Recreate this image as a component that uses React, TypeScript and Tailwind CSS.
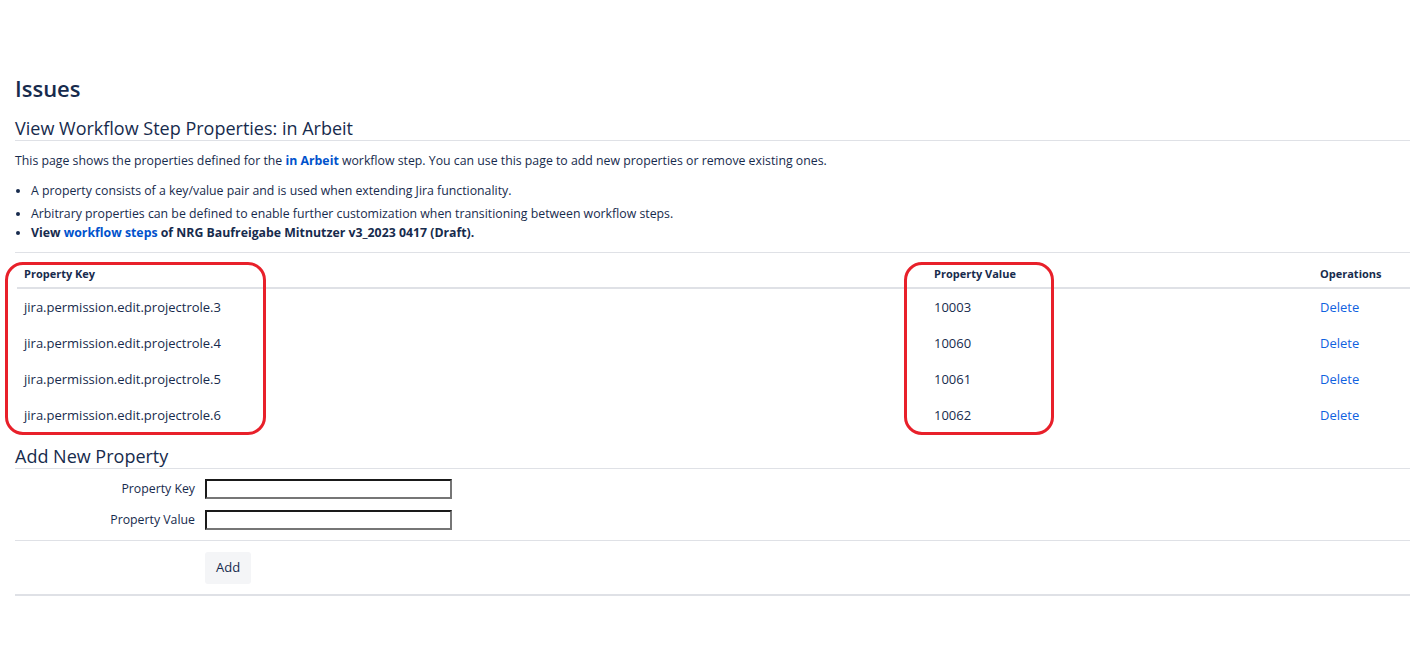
import React from "react";

const rows = [
  ["jira.permission.edit.projectrole.3", "10003"],
  ["jira.permission.edit.projectrole.4", "10060"],
  ["jira.permission.edit.projectrole.5", "10061"],
  ["jira.permission.edit.projectrole.6", "10062"],
];

export default function App() {
  return (
    <div className="relative w-[1414px] h-[667px] bg-white text-[#172b4d] font-['Open_Sans','Noto_Sans',sans-serif] text-[12.3px]">
      <div className="pl-[15px] pr-[4px] pt-[74px]">
        <h1 className="text-[22px] leading-[28px] font-semibold">Issues</h1>
        <h2 className="mt-[14px] text-[18px] leading-[24px] font-medium border-b border-[#dfe1e6] pb-[0px]">
          View Workflow Step Properties: in Arbeit
        </h2>
        <p className="mt-[12px] leading-[16px]">
          This page shows the properties defined for the{" "}
          <a className="text-[#0052cc] font-bold">in Arbeit</a> workflow step. You can use this page to add new properties or remove existing ones.
        </p>
        <ul className="mt-[14px] list-disc pl-[16px] leading-[16px]">
          <li className="mb-[7px]">A property consists of a key/value pair and is used when extending Jira functionality.</li>
          <li className="mb-[3px]">Arbitrary properties can be defined to enable further customization when transitioning between workflow steps.</li>
          <li className="font-bold">
            View <a className="text-[#0052cc]">workflow steps</a> of NRG Baufreigabe Mitnutzer v3_2023 0417 (Draft).
          </li>
        </ul>
        <div className="mt-[11px] border-t border-[#dfe1e6]" />
        <table className="mt-[9px] ml-[2px] w-[1393px] border-collapse">
          <thead>
            <tr className="border-b-2 border-[#dfe1e6]">
              <th className="text-left font-bold text-[11px] h-[26px] pl-[7px] align-middle">Property Key</th>
              <th className="text-left font-bold text-[11px] pl-[7px] align-middle w-[386px]">Property Value</th>
              <th className="text-left font-bold text-[11px] pl-[7px] align-middle w-[97px]">Operations</th>
            </tr>
          </thead>
          <tbody>
            {rows.map(([k, v]) => (
              <tr key={k} className="h-[36px]">
                <td className="pl-[7px] pt-[3px] text-[13px]">{k}</td>
                <td className="pl-[7px] pt-[3px] text-[13px]">{v}</td>
                <td className="pl-[7px] pt-[3px] text-[13px]">
                  <a className="text-[#1062e0]">Delete</a>
                </td>
              </tr>
            ))}
          </tbody>
        </table>
        <h3 className="mt-[13px] text-[18px] leading-[22px] font-medium border-b border-[#dfe1e6] pb-[1px]">Add New Property</h3>
        <div className="mt-[10px] flex flex-col gap-[11px]">
          <div className="flex items-center">
            <label className="w-[190px] text-right pr-[10px] text-[12.3px]">Property Key</label>
            <input className="w-[247px] h-[20px] border-2 border-t-[#1a1a1a] border-l-[#1a1a1a] border-r-[#767676] border-b-[#767676] outline-none" />
          </div>
          <div className="flex items-center">
            <label className="w-[190px] text-right pr-[10px] text-[12.3px]">Property Value</label>
            <input className="w-[247px] h-[20px] border-2 border-t-[#1a1a1a] border-l-[#1a1a1a] border-r-[#767676] border-b-[#767676] outline-none" />
          </div>
        </div>
        <div className="mt-[10px] border-t border-[#dfe1e6]" />
        <div className="pt-[11px] pb-[10px] pl-[190px]">
          <button className="h-[32px] px-[11px] bg-[#f4f5f7] rounded-[3px] text-[13px] text-[#172b4d]">Add</button>
        </div>
        <div className="border-t-2 border-[#dfe1e6]" />
      </div>
      <div className="absolute left-[5px] top-[262px] w-[261px] h-[173px] border-[3px] border-[#e8202a] rounded-[18px] pointer-events-none" />
      <div className="absolute left-[904px] top-[262px] w-[150px] h-[173px] border-[3px] border-[#e8202a] rounded-[18px] pointer-events-none" />
    </div>
  );
}
